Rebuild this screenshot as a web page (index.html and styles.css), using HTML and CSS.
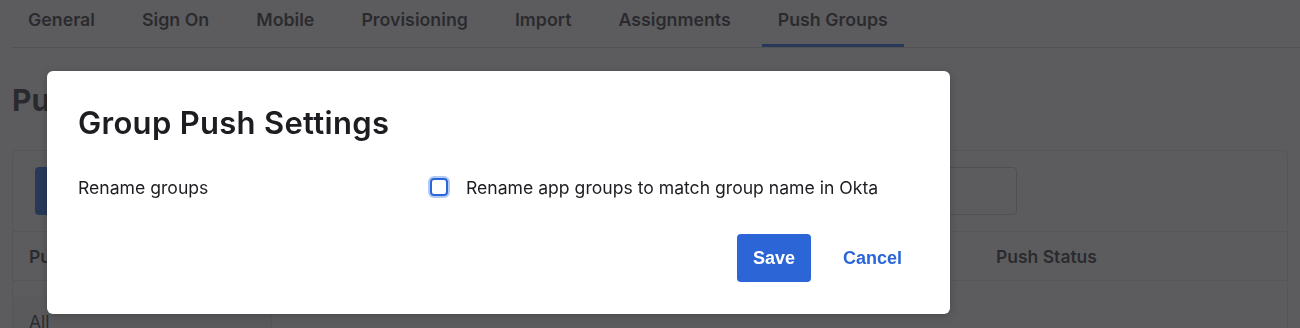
FILE: index.html
```html
<!DOCTYPE html>
<html lang="en">
<head>
    <meta charset="UTF-8">
    <meta name="viewport" content="width=device-width, initial-scale=1.0">
    <title>Push Groups</title>
    <link rel="stylesheet" href="styles.css">
</head>
<body>
    <div class="page">
        <nav class="tabs">
            <ul>
                <li>General</li>
                <li>Sign On</li>
                <li>Mobile</li>
                <li>Provisioning</li>
                <li>Import</li>
                <li>Assignments</li>
                <li class="active">Push Groups</li>
            </ul>
        </nav>
        <main class="content">
            <h1 class="page-title">Push Groups</h1>
            <div class="panel">
                <div class="toolbar">
                    <button class="push-btn">+ Push Groups</button>
                    <div class="search"></div>
                </div>
                <div class="table-head">
                    <span class="col-name">Push Groups</span>
                    <span class="col-status">Push Status</span>
                </div>
                <div class="table-body">
                    <aside class="side">
                        <div class="side-item">All</div>
                    </aside>
                    <div class="rows"></div>
                </div>
            </div>
        </main>
    </div>

    <div class="overlay"></div>

    <div class="modal">
        <h2 class="modal-title">Group Push Settings</h2>
        <div class="form-row">
            <span class="form-label">Rename groups</span>
            <label class="check">
                <span class="check-box"></span>
                Rename app groups to match group name in Okta
            </label>
        </div>
        <div class="modal-footer">
            <button class="btn-save">Save</button>
            <button class="btn-cancel">Cancel</button>
        </div>
    </div>
</body>
</html>
```

FILE: styles.css
```css
body {
    margin: 0;
    font-family: Inter, "Noto Sans", sans-serif;
    color: #1d1d21;
    background-color: #fff;
    overflow: hidden;
}

/* page under the dialog */
.tabs {
    margin-left: 12px;
    border-bottom: 1px solid #d7d7dc;
}
.tabs ul {
    list-style-type: none;
    margin: 0;
    padding: 0;
    display: flex;
}
.tabs li {
    padding: 0 16px;
    margin-right: 15px;
    height: 47px;
    line-height: 40px;
    font-size: 17.8px;
    font-weight: 600;
    box-sizing: border-box;
}
.tabs li.active {
    border-bottom: 3px solid #1662dd;
}

.content {
    padding: 0 12px;
}
.page-title {
    margin: 0;
    padding-top: 32px;
    font-size: 30px;
    line-height: 40px;
    font-weight: 700;
}
.panel {
    margin-top: 30px;
    border: 1px solid #e1e1e6;
    border-radius: 4px;
}
.toolbar {
    display: flex;
    align-items: center;
    padding: 16px 22px;
    border-bottom: 1px solid #e1e1e6;
}
.push-btn {
    height: 48px;
    width: 180px;
    border: none;
    border-radius: 4px;
    background-color: #1662dd;
    color: #fff;
}
.search {
    margin-left: auto;
    margin-right: 248px;
    width: 420px;
    height: 46px;
    border: 1px solid #c4c4cc;
    border-radius: 4px;
}
.table-head {
    display: flex;
    align-items: center;
    height: 48px;
    padding-left: 16px;
    border-bottom: 1px solid #e1e1e6;
    font-size: 17.5px;
    font-weight: 600;
}
.col-name {
    width: 967px;
}
.table-body {
    display: flex;
    height: 80px;
}
.side {
    width: 258px;
    border-right: 1px solid #e1e1e6;
    padding-top: 16px;
}
.side-item {
    padding: 14px 16px;
    background-color: #f4f4f6;
    font-size: 17.5px;
}

.overlay {
    position: fixed;
    top: 0;
    left: 0;
    right: 0;
    bottom: 0;
    background-color: rgba(46, 46, 50, 0.78);
}

/* dialog */
.modal {
    position: fixed;
    left: 47px;
    top: 71px;
    width: 903px;
    box-sizing: border-box;
    padding: 32px 32px 32px 31px;
    background-color: #fff;
    border-radius: 6px;
    box-shadow: 0 2px 8px rgba(0, 0, 0, 0.2);
}
.modal-title {
    margin: 0;
    font-size: 31px;
    line-height: 40px;
    font-weight: 600;
    letter-spacing: 0.3px;
    color: #1d1d21;
}
.form-row {
    margin-top: 32px;
    display: grid;
    grid-template-columns: 352px 1fr;
    align-items: center;
    height: 24px;
    font-size: 17.6px;
}
.check {
    display: flex;
    align-items: center;
}
.check-box {
    width: 18px;
    height: 18px;
    box-sizing: border-box;
    border: 2px solid #2a66d9;
    border-radius: 4px;
    margin-right: 18px;
    box-shadow: 0 0 0 2px rgba(42, 102, 217, 0.35);
}
.modal-footer {
    margin-top: 35px;
    display: flex;
    justify-content: flex-end;
    gap: 16px;
}
.modal-footer button {
    height: 48px;
    padding: 0 16px;
    border: none;
    border-radius: 4px;
    font-family: "Liberation Sans", Arial, sans-serif;
    font-size: 18px;
    font-weight: 700;
    cursor: pointer;
}
.btn-save {
    background-color: #2c65d6;
    color: #fff;
}
.btn-cancel {
    background: none;
    color: #2a66d9;
}
```
